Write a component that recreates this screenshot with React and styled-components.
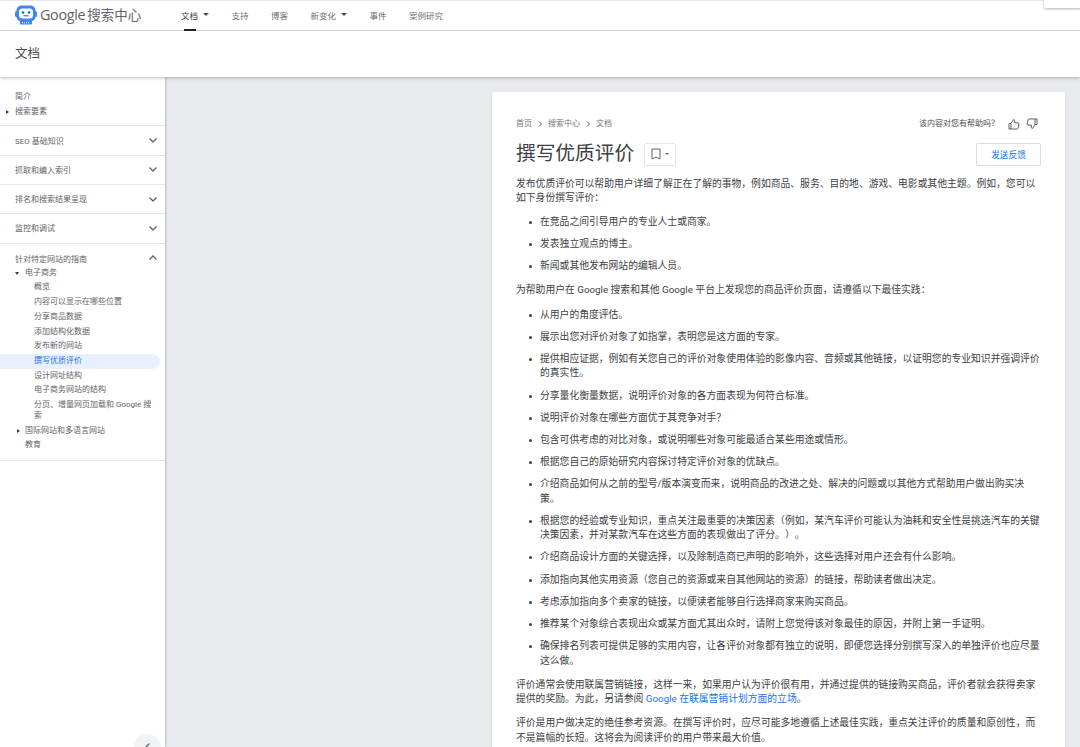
import React from 'react'
import styled, { createGlobalStyle } from 'styled-components'

const FONT = 'Roboto, "Noto Sans CJK SC", sans-serif'

const GlobalStyle = createGlobalStyle`
  html, body {
    margin: 0;
    padding: 0;
    height: 100%;
    overflow: hidden;
    background: #e8eaed;
  }
  * {
    box-sizing: border-box;
  }
`

const navLinks = [
  { title: '文档', active: true, caret: true },
  { title: '支持' },
  { title: '博客' },
  { title: '新变化', caret: true },
  { title: '事件' },
  { title: '案例研究' },
]

const sections = ['SEO 基础知识', '抓取和编入索引', '排名和搜索结果呈现', '监控和调试']

const ecommerce = [
  { title: '概览' },
  { title: '内容可以显示在哪些位置' },
  { title: '分享商品数据' },
  { title: '添加结构化数据' },
  { title: '发布新的网站' },
  { title: '撰写优质评价', active: true },
  { title: '设计网址结构' },
  { title: '电子商务网站的结构' },
  { title: '分页、增量网页加载和 Google 搜索' },
]

const whoList = [
  '在竞品之间引导用户的专业人士或商家。',
  '发表独立观点的博主。',
  '新闻或其他发布网站的编辑人员。',
]

const practiceList = [
  '从用户的角度评估。',
  '展示出您对评价对象了如指掌，表明您是这方面的专家。',
  '提供相应证据，例如有关您自己的评价对象使用体验的影像内容、音频或其他链接，以证明您的专业知识并强调评价的真实性。',
  '分享量化衡量数据，说明评价对象的各方面表现为何符合标准。',
  '说明评价对象在哪些方面优于其竞争对手？',
  '包含可供考虑的对比对象，或说明哪些对象可能最适合某些用途或情形。',
  '根据您自己的原始研究内容探讨特定评价对象的优缺点。',
  '介绍商品如何从之前的型号/版本演变而来，说明商品的改进之处、解决的问题或以其他方式帮助用户做出购买决策。',
  '根据您的经验或专业知识，重点关注最重要的决策因素（例如，某汽车评价可能认为油耗和安全性是挑选汽车的关键决策因素，并对某款汽车在这些方面的表现做出了评分。）。',
  '介绍商品设计方面的关键选择，以及除制造商已声明的影响外，这些选择对用户还会有什么影响。',
  '添加指向其他实用资源（您自己的资源或来自其他网站的资源）的链接，帮助读者做出决定。',
  '考虑添加指向多个卖家的链接，以便读者能够自行选择商家来购买商品。',
  '推荐某个对象综合表现出众或某方面尤其出众时，请附上您觉得该对象最佳的原因，并附上第一手证明。',
  '确保排名列表可提供足够的实用内容，让各评价对象都有独立的说明，即便您选择分别撰写深入的单独评价也应尽量这么做。',
]

const Page = styled.div`
  display: flex;
  flex-direction: column;
  height: 747px;
  overflow: hidden;
  position: relative;
  background: #e8eaed;
  color: #3c4043;
  font-family: ${FONT};
  text-spacing-trim: space-all;
`

const TopBar = styled.header`
  display: flex;
  align-items: stretch;
  flex: none;
  height: 31px;
  background: #fff;
  border-top: 1px solid #e4e5e7;
  border-bottom: 1px solid #dadce0;
`

const Brand = styled.div`
  display: flex;
  align-items: center;
  width: 181px;
  flex: none;
  padding: 0 0 2px 15px;
  color: #5f6368;
`

const BrandName = styled.span`
  margin-left: 3px;
  font-family: "Open Sans", ${FONT};
  font-size: 14.4px;
  letter-spacing: -0.35px;
  line-height: 26px;
`

const BrandLabel = styled.span`
  margin-left: 2px;
  font-size: 13.5px;
  line-height: 26px;
`

const Nav = styled.nav`
  display: flex;
  align-items: stretch;
  gap: 22.5px;
`

const NavItem = styled.a`
  display: flex;
  align-items: center;
  gap: 5px;
  position: relative;
  padding-bottom: 2px;
  font-size: 8.5px;
  color: ${(p) => (p.$active ? '#3c4043' : '#6c7075')};
  &::after {
    content: '';
    display: ${(p) => (p.$active ? 'block' : 'none')};
    position: absolute;
    left: 3px;
    bottom: -1px;
    width: 12px;
    height: 2px;
    background: #202124;
  }
`

const Caret = styled.span`
  width: 0;
  height: 0;
  border-left: ${(p) => p.$size || 3}px solid transparent;
  border-right: ${(p) => p.$size || 3}px solid transparent;
  border-top: ${(p) => p.$size || 3}px solid ${(p) => p.$color || '#4a4d51'};
`

const Popover = styled.div`
  position: absolute;
  top: 0;
  right: -2px;
  width: 38px;
  height: 8px;
  background: #fff;
  border-radius: 0 0 2px 2px;
  box-shadow: 0 1px 3px rgba(60, 64, 67, 0.4);
`

const SubBar = styled.div`
  display: flex;
  align-items: center;
  flex: none;
  height: 46px;
  padding: 0 0 3px 15px;
  background: #fff;
  font-size: 12.5px;
  color: #4a4d51;
  box-shadow: 0 1px 3px rgba(60, 64, 67, 0.35);
  position: relative;
  z-index: 2;
`

const Body = styled.div`
  display: flex;
  flex: 1;
  min-height: 0;
`

const Sidebar = styled.aside`
  flex: none;
  width: 165px;
  position: relative;
  background: #fff;
  box-shadow: 1px 0 2px rgba(60, 64, 67, 0.25);
  font-size: 8px;
  color: #5f6368;
`

const SideGroup = styled.div`
  padding: ${(p) => p.$padding};
  border-bottom: 1px solid #e4e5e7;
`

const SideRow = styled.div`
  display: flex;
  align-items: center;
  line-height: 10.7px;
  padding: 2px 5px 2px ${(p) => p.$indent || 15}px;
  margin-right: 5px;
  position: relative;
  border-radius: 0 8px 8px 0;
  background: ${(p) => (p.$active ? '#e8f0fe' : 'transparent')};
  color: ${(p) => (p.$active ? '#1a73e8' : 'inherit')};
`

const SectionRow = styled.div`
  display: flex;
  align-items: center;
  justify-content: space-between;
  height: 29.3px;
  padding: 0 6.5px 1px 15px;
  border-bottom: 1px solid #e4e5e7;
`

const SectionHead = styled.div`
  display: flex;
  align-items: center;
  justify-content: space-between;
  height: 14.7px;
  padding: 0 6.5px 0 15px;
`

const Chevron = styled.svg`
  width: 12px;
  height: 12px;
  fill: none;
  stroke: #5f6368;
  stroke-width: 1.3;
`

const ArrowRight = styled.span`
  position: absolute;
  left: ${(p) => p.$left}px;
  width: 0;
  height: 0;
  border-top: 2.5px solid transparent;
  border-bottom: 2.5px solid transparent;
  border-left: 3px solid #3c4043;
`

const ArrowDown = styled.span`
  position: absolute;
  left: ${(p) => p.$left}px;
  width: 0;
  height: 0;
  border-left: 2.5px solid transparent;
  border-right: 2.5px solid transparent;
  border-top: 3px solid #3c4043;
`

const CollapseButton = styled.button`
  position: absolute;
  left: 134px;
  top: 657px;
  width: 27px;
  height: 27px;
  padding: 7px 0 0;
  border: 0;
  border-radius: 50%;
  background: #f1f3f4;
  display: flex;
  align-items: flex-start;
  justify-content: center;
`

const Main = styled.main`
  flex: 1;
  min-width: 0;
  display: flex;
  justify-content: flex-end;
  padding: 15px 15px 0 0;
`

const Card = styled.article`
  width: 573px;
  height: 680px;
  padding: 26px 24px 0;
  background: #fff;
  border-radius: 2px 2px 0 0;
  box-shadow: 0 1px 2px rgba(60, 64, 67, 0.2);
  font-size: 9.8px;
  line-height: 14.7px;
`

const TopLine = styled.div`
  display: flex;
  align-items: center;
  justify-content: space-between;
  height: 12px;
  padding-right: 3px;
`

const Crumbs = styled.div`
  display: flex;
  align-items: center;
  gap: 4px;
  font-size: 8px;
  color: #72767b;
`

const CrumbSep = styled.svg`
  width: 8px;
  height: 8px;
  fill: none;
  stroke: #5f6368;
  stroke-width: 1;
`

const Helpful = styled.div`
  display: flex;
  align-items: center;
  font-size: 8px;
  color: #4a4d51;
`

const ThumbIcon = styled.svg`
  width: 12px;
  height: 12px;
  margin-left: ${(p) => p.$gap}px;
  fill: none;
  stroke: #5f6368;
  stroke-width: 1;
`

const TitleLine = styled.div`
  display: flex;
  align-items: center;
  justify-content: space-between;
  margin-top: 10px;
  height: 28px;
`

const TitleGroup = styled.div`
  display: flex;
  align-items: center;
  gap: 10px;
`

const Title = styled.h1`
  margin: 0;
  font-size: 19.7px;
  font-weight: 400;
  line-height: 28px;
  color: #3c4043;
`

const BookmarkButton = styled.button`
  display: flex;
  align-items: center;
  justify-content: center;
  gap: 4px;
  width: 32px;
  height: 23px;
  padding: 0;
  background: #fff;
  border: 1px solid #e4e5e7;
  border-radius: 2px;
`

const FeedbackButton = styled.button`
  width: 65px;
  height: 23px;
  padding: 0;
  background: #fff;
  border: 1px solid #dadce0;
  border-radius: 2px;
  color: #1a73e8;
  font-family: ${FONT};
  font-size: 8.7px;
`

const Para = styled.p`
  margin: ${(p) => p.$top || 9.35}px 0 0;
`

const BulletList = styled.ul`
  margin: 9.35px 0 0;
  padding: 0 0 0 24px;
  list-style: none;
`

const Bullet = styled.li`
  position: relative;
  margin-top: 7.4px;
  &:first-child {
    margin-top: 0;
  }
  &::before {
    content: '';
    position: absolute;
    left: -11px;
    top: 6px;
    width: 3px;
    height: 3px;
    border-radius: 50%;
    background: #3c4043;
  }
`

const TextLink = styled.a`
  color: #1a73e8;
`

const Logo = () => (
  <svg width="22" height="20" viewBox="0 0 22 20">
    <rect x="0" y="6" width="3" height="6" rx="1.5" fill="#4285f4" />
    <rect x="19" y="6" width="3" height="6" rx="1.5" fill="#4285f4" />
    <rect x="1.5" y="0.5" width="19" height="16" rx="5" fill="#4285f4" />
    <rect x="4" y="3.5" width="14" height="10" rx="3.5" fill="#fff" />
    <circle cx="8" cy="7.5" r="1.3" fill="#1967d2" />
    <circle cx="14" cy="7.5" r="1.3" fill="#1967d2" />
    <path d="M8.5 10.8h5" stroke="#1967d2" strokeWidth="1" fill="none" />
    <path d="M5 16h12v2.5a1 1 0 0 1-1 1H6a1 1 0 0 1-1-1z" fill="#4285f4" />
    <path d="M7 17.8h8" stroke="#fff" strokeWidth="1" strokeDasharray="1 1" />
  </svg>
)

const App = () => {
  return (
    <Page>
      <GlobalStyle />
      <TopBar>
        <Brand>
          <Logo />
          <BrandName>Google</BrandName>
          <BrandLabel>搜索中心</BrandLabel>
        </Brand>
        <Nav>
          {navLinks.map((item) => (
            <NavItem key={item.title} $active={item.active}>
              {item.title}
              {item.caret && <Caret />}
            </NavItem>
          ))}
        </Nav>
        <Popover />
      </TopBar>
      <SubBar>文档</SubBar>
      <Body>
        <Sidebar>
          <SideGroup $padding="13px 0 6px">
            <SideRow>简介</SideRow>
            <SideRow>
              <ArrowRight $left={6} />
              搜索要素
            </SideRow>
          </SideGroup>
          {sections.map((title) => (
            <SectionRow key={title}>
              {title}
              <Chevron viewBox="0 0 12 12">
                <path d="M2.5 4.5 6 8l3.5-3.5" />
              </Chevron>
            </SectionRow>
          ))}
          <SideGroup $padding="7.5px 0 7px">
            <SectionHead>
              针对特定网站的指南
              <Chevron viewBox="0 0 12 12">
                <path d="M2.5 7.5 6 4l3.5 3.5" />
              </Chevron>
            </SectionHead>
            <SideRow $indent={25}>
              <ArrowDown $left={15} />
              电子商务
            </SideRow>
            {ecommerce.map((item) => (
              <SideRow key={item.title} $indent={34} $active={item.active}>
                {item.title}
              </SideRow>
            ))}
            <SideRow $indent={25}>
              <ArrowRight $left={17} />
              国际网站和多语言网站
            </SideRow>
            <SideRow $indent={25}>教育</SideRow>
          </SideGroup>
          <CollapseButton aria-label="收起">
            <Chevron viewBox="0 0 12 12">
              <path d="M7.5 2.5 4 6l3.5 3.5" />
            </Chevron>
          </CollapseButton>
        </Sidebar>
        <Main>
          <Card>
            <TopLine>
              <Crumbs>
                首页
                <CrumbSep viewBox="0 0 8 8">
                  <path d="M3 1.5 5.5 4 3 6.5" />
                </CrumbSep>
                搜索中心
                <CrumbSep viewBox="0 0 8 8">
                  <path d="M3 1.5 5.5 4 3 6.5" />
                </CrumbSep>
                文档
              </Crumbs>
              <Helpful>
                该内容对您有帮助吗？
                <ThumbIcon viewBox="0 0 12 12" $gap={9}>
                  <path d="M1 5.5h2V11H1zM3 5.5l2.5-4c.8 0 1.3.6 1.2 1.4L6.4 4.8H10c.6 0 1 .5.9 1.1l-.8 4.2c-.1.5-.5.9-1 .9H3" />
                </ThumbIcon>
                <ThumbIcon viewBox="0 0 12 12" $gap={6}>
                  <path d="M11 6.5H9V1h2zM9 6.5l-2.500 4c-.8 0-1.300-.6-1.200-1.400l.3-1.900H2c-.6 0-1-.5-.9-1.100l.8-4.200C2 1.400 2.400 1 2.900 1H9" />
                </ThumbIcon>
              </Helpful>
            </TopLine>
            <TitleLine>
              <TitleGroup>
                <Title>撰写优质评价</Title>
                <BookmarkButton aria-label="书签">
                  <svg width="10" height="12" viewBox="0 0 10 12" fill="none" stroke="#5f6368" strokeWidth="1">
                    <path d="M1 1h8v10L5 9l-4 2z" />
                  </svg>
                  <Caret $size={2.5} $color="#5f6368" />
                </BookmarkButton>
              </TitleGroup>
              <FeedbackButton>发送反馈</FeedbackButton>
            </TitleLine>
            <Para $top={8.5}>
              发布优质评价可以帮助用户详细了解正在了解的事物，例如商品、服务、目的地、游戏、电影或其他主题。例如，您可以如下身份撰写评价：
            </Para>
            <BulletList>
              {whoList.map((text) => (
                <Bullet key={text}>{text}</Bullet>
              ))}
            </BulletList>
            <Para>为帮助用户在 Google 搜索和其他 Google 平台上发现您的商品评价页面，请遵循以下最佳实践：</Para>
            <BulletList>
              {practiceList.map((text) => (
                <Bullet key={text}>{text}</Bullet>
              ))}
            </BulletList>
            <Para>
              评价通常会使用联属营销链接，这样一来，如果用户认为评价很有用，并通过提供的链接购买商品，评价者就会获得卖家提供的奖励。为此，另请参阅 <TextLink>Google 在联属营销计划方面的立场</TextLink>。
            </Para>
            <Para>
              评价是用户做决定的绝佳参考资源。在撰写评价时，应尽可能多地遵循上述最佳实践，重点关注评价的质量和原创性，而不是篇幅的长短。这将会为阅读评价的用户带来最大价值。
            </Para>
          </Card>
        </Main>
      </Body>
    </Page>
  )
}

export default App
